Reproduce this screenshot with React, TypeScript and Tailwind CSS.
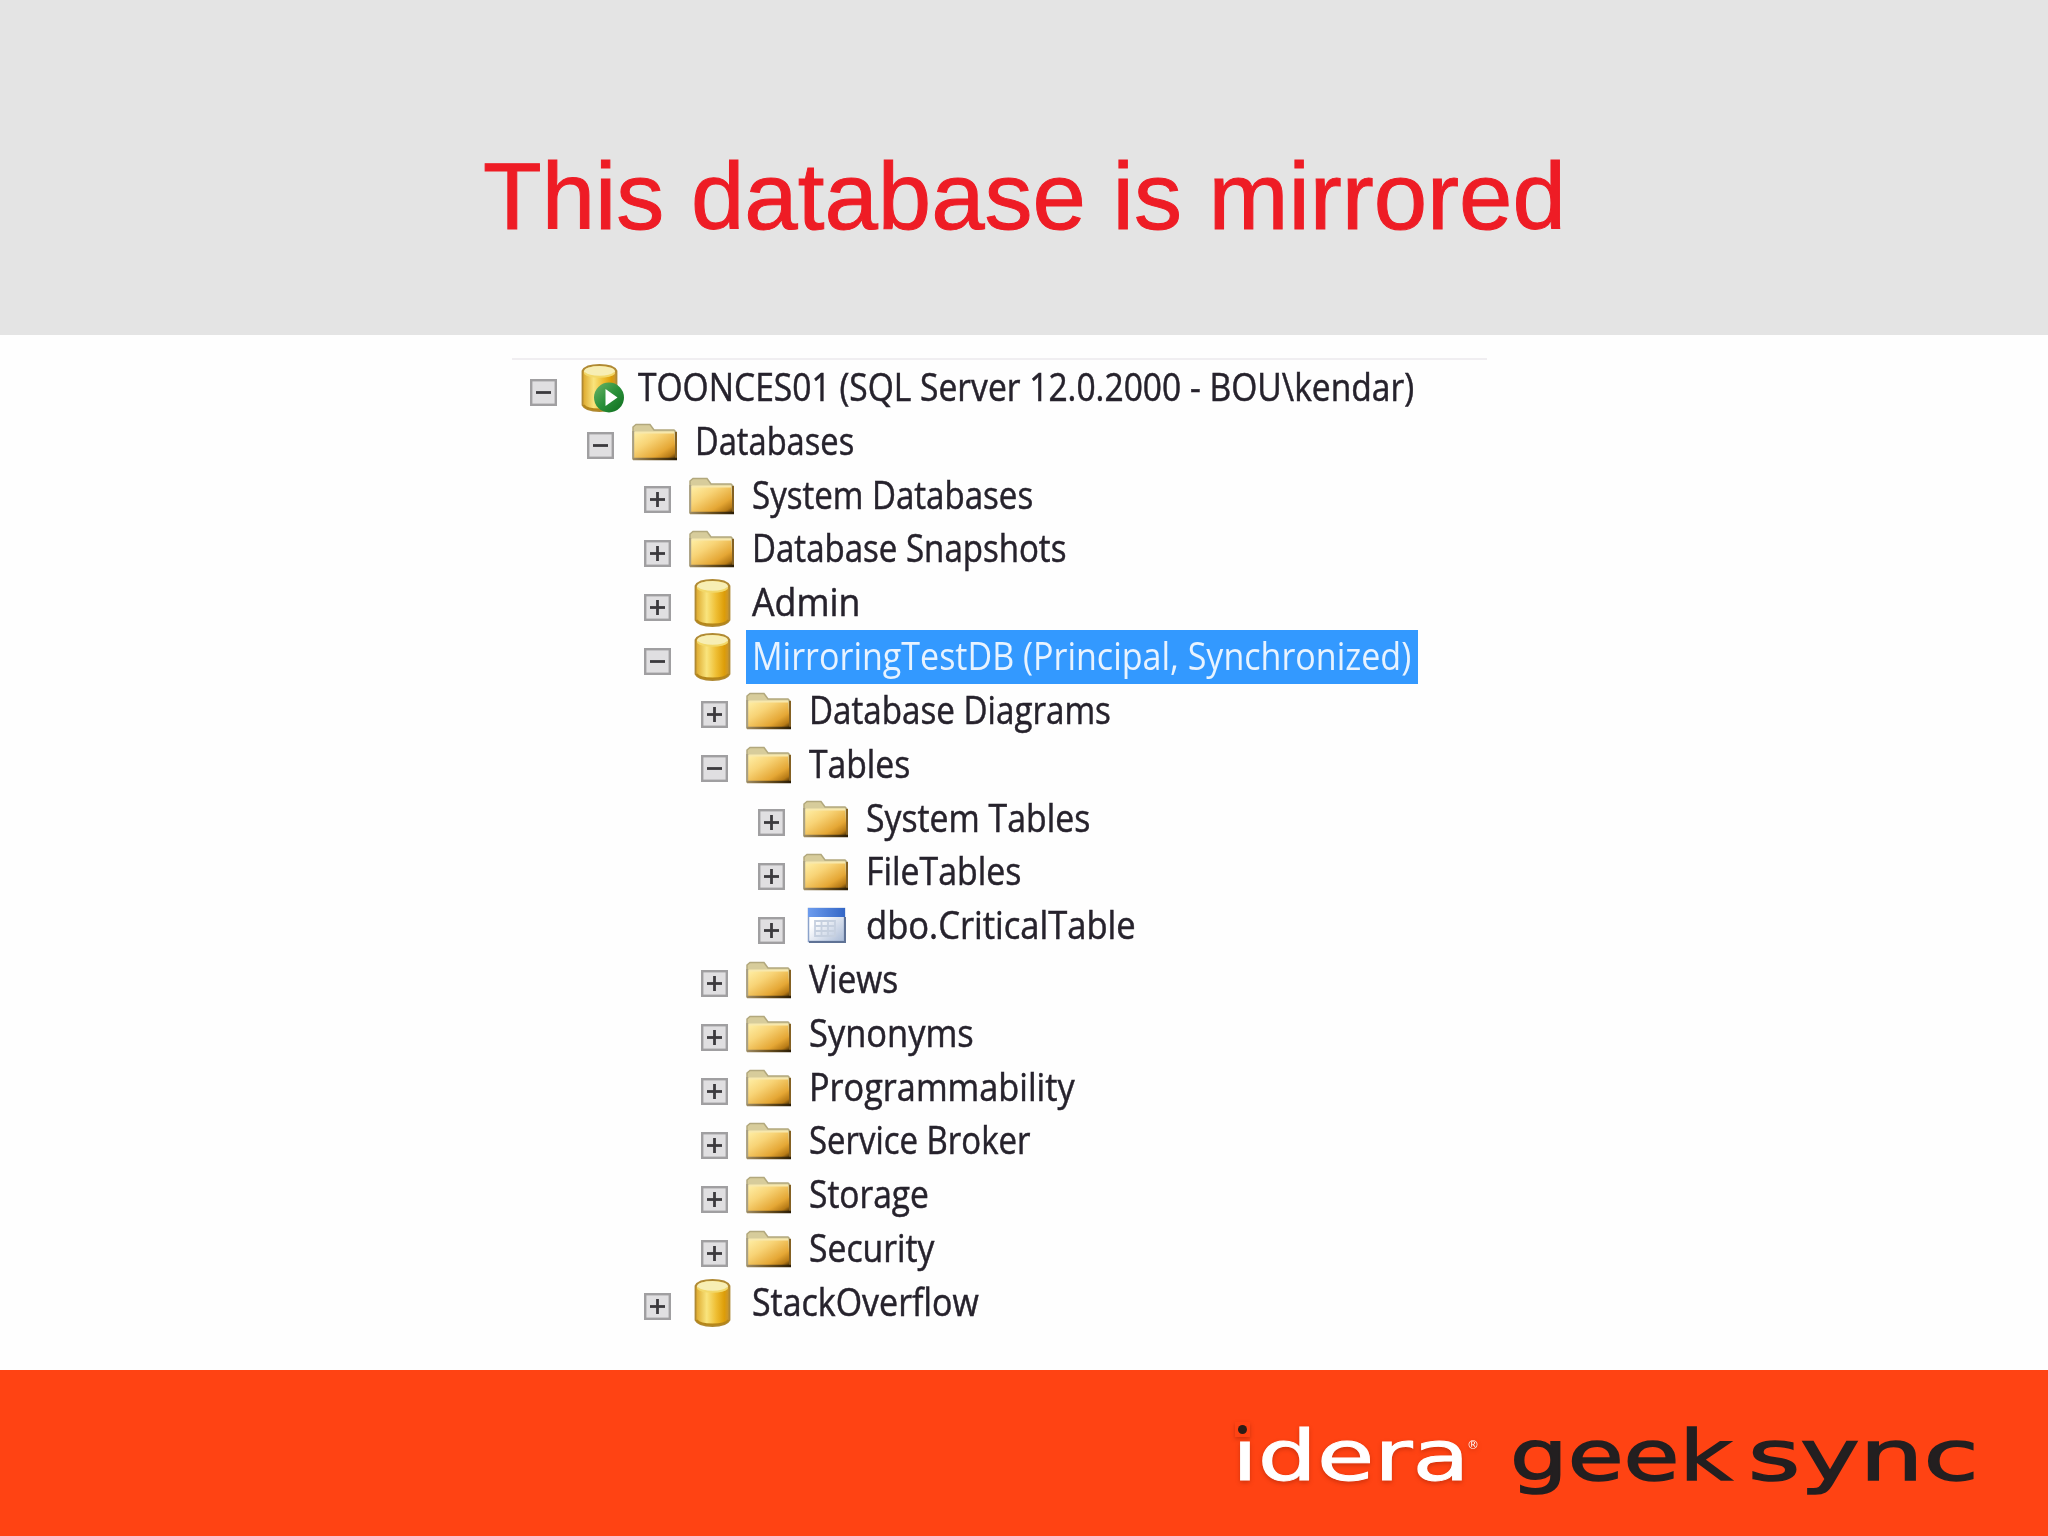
import * as React from 'react'

type IconName = 'server' | 'folder' | 'database' | 'table'

type TreeNode = {
  label: string
  level: number
  icon: IconName
  width: number
  open?: boolean
  selected?: boolean
}

const nodes: Array<TreeNode> = [
  {label: 'TOONCES01 (SQL Server 12.0.2000 - BOU\\kendar)', level: 0, icon: 'server', width: 776, open: true},
  {label: 'Databases', level: 1, icon: 'folder', width: 159, open: true},
  {label: 'System Databases', level: 2, icon: 'folder', width: 281},
  {label: 'Database Snapshots', level: 2, icon: 'folder', width: 314},
  {label: 'Admin', level: 2, icon: 'database', width: 108},
  {label: 'MirroringTestDB (Principal, Synchronized)', level: 2, icon: 'database', width: 659, open: true, selected: true},
  {label: 'Database Diagrams', level: 3, icon: 'folder', width: 302},
  {label: 'Tables', level: 3, icon: 'folder', width: 101, open: true},
  {label: 'System Tables', level: 4, icon: 'folder', width: 224},
  {label: 'FileTables', level: 4, icon: 'folder', width: 155},
  {label: 'dbo.CriticalTable', level: 4, icon: 'table', width: 270},
  {label: 'Views', level: 3, icon: 'folder', width: 89},
  {label: 'Synonyms', level: 3, icon: 'folder', width: 165},
  {label: 'Programmability', level: 3, icon: 'folder', width: 266},
  {label: 'Service Broker', level: 3, icon: 'folder', width: 221},
  {label: 'Storage', level: 3, icon: 'folder', width: 120},
  {label: 'Security', level: 3, icon: 'folder', width: 125},
  {label: 'StackOverflow', level: 2, icon: 'database', width: 227},
]

// Stretches or condenses a line of text to the given width
function FitText({width, children}: {width: number; children: string}) {
  const ref = React.useRef<HTMLSpanElement>(null)
  const [scale, setScale] = React.useState(1)

  React.useLayoutEffect(() => {
    if (!ref.current) return
    setScale(width / ref.current.offsetWidth)
  }, [width])

  return (
    <span className="block" style={{width}}>
      <span
        ref={ref}
        className="inline-block origin-left whitespace-pre"
        style={{transform: `scaleX(${scale})`}}
      >
        {children}
      </span>
    </span>
  )
}

function Expander({open}: {open?: boolean}) {
  return (
    <svg className="mt-[17.5px] h-[27px] w-[27px] shrink-0" viewBox="0 0 27 27">
      <rect x="1.2" y="1.2" width="24.6" height="24.6" fill="#e0dfe1" stroke="#a09fa1" strokeWidth="2.4" />
      <path d="M6 13.5h15" stroke="#3c3a3e" strokeWidth="2.8" />
      {!open && <path d="M13.5 6v15" stroke="#3c3a3e" strokeWidth="2.8" />}
    </svg>
  )
}

function Cylinder({x, y}: {x: number; y: number}) {
  return (
    <g transform={`translate(${x} ${y})`}>
      <path
        d="M1 7C3 3 10 1 18 1s15 2 17 6v34c-2 4-9 6-17 6S3 45 1 41z"
        fill="url(#gold)"
        stroke="#b08a35"
        strokeWidth="1.8"
      />
      <ellipse cx="18" cy="7.5" rx="15.5" ry="5.5" fill="#f7eeb4" />
      <path d="M3 9c5 5 25 5 30 0" fill="none" stroke="#f2d869" strokeWidth="2" />
      <path d="M2 41c4 6 28 6 32 0" fill="none" stroke="#b58619" strokeWidth="2" />
    </g>
  )
}

function NodeIcon({name}: {name: IconName}) {
  return (
    <svg className="h-[54px] w-[57px] shrink-0" viewBox="0 0 57 54">
      {name === 'folder' && (
        <>
          <path d="M1 44V12l3-2.5h14L22 15h20l2 2v27z" fill="#d7cc9b" stroke="#b2a87d" strokeWidth="1.5" />
          <path d="M2 17h40l2 27H2z" fill="url(#folder)" />
          <path d="M2.5 17.5H42" stroke="#f7e8ad" strokeWidth="1.8" />
          <path d="M1.2 16v28" stroke="#a89f84" strokeWidth="2" />
          <path d="M44 17v27" stroke="#846123" strokeWidth="2" />
          <path d="M1 44h44" stroke="url(#edge)" strokeWidth="2.6" />
        </>
      )}
      {name === 'database' && <Cylinder x={5.5} y={3} />}
      {name === 'server' && (
        <>
          <Cylinder x={6.5} y={3} />
          <circle cx="34" cy="36.5" r="15" fill="url(#green)" />
          <path d="M30.5 28v17l12-8.5z" fill="#fff" />
        </>
      )}
      {name === 'table' && (
        <>
          <rect x="5.5" y="9.5" width="36" height="33" fill="url(#sheet)" stroke="#8ba2cb" strokeWidth="1.5" />
          <rect x="5" y="9" width="37" height="9" fill="url(#blue)" />
          <path d="M42 18v25H6" fill="none" stroke="#5f7295" strokeWidth="2" />
          <path d="M12 22h20v15H12zM12 27h20M12 32h20M18.5 22v15M25 22v15" fill="none" stroke="#c6d0df" strokeWidth="1.8" />
        </>
      )}
    </svg>
  )
}

function Gradients() {
  return (
    <svg className="absolute h-0 w-0">
      <defs>
        <linearGradient id="gold">
          <stop offset="0" stopColor="#dca629" />
          <stop offset="0.33" stopColor="#f9e47d" />
          <stop offset="0.6" stopColor="#efbf35" />
          <stop offset="0.85" stopColor="#dd9d08" />
          <stop offset="1" stopColor="#c59436" />
        </linearGradient>
        <linearGradient id="folder" x1="0" y1="0" x2="1" y2="1">
          <stop offset="0" stopColor="#fff0a8" />
          <stop offset="0.35" stopColor="#f8d477" />
          <stop offset="0.7" stopColor="#e5a735" />
          <stop offset="0.87" stopColor="#b87b16" />
          <stop offset="1" stopColor="#3c2704" />
        </linearGradient>
        <linearGradient id="edge" gradientUnits="userSpaceOnUse" x1="0" y1="0" x2="45" y2="0">
          <stop offset="0" stopColor="#a08e68" />
          <stop offset="0.5" stopColor="#6b5120" />
          <stop offset="1" stopColor="#2a1c05" />
        </linearGradient>
        <linearGradient id="green" x1="0" y1="0" x2="1" y2="1">
          <stop offset="0" stopColor="#6db46a" />
          <stop offset="0.5" stopColor="#2b913a" />
          <stop offset="1" stopColor="#0d6c1d" />
        </linearGradient>
        <linearGradient id="blue">
          <stop offset="0" stopColor="#6d9cee" />
          <stop offset="1" stopColor="#3467c6" />
        </linearGradient>
        <linearGradient id="sheet" x1="0" y1="0" x2="1" y2="1">
          <stop offset="0.3" stopColor="#ffffff" />
          <stop offset="1" stopColor="#a9bad6" />
        </linearGradient>
      </defs>
    </svg>
  )
}

export default function App() {
  return (
    <div className="flex h-[1536px] w-[2048px] flex-col overflow-hidden bg-[#fefefe]">
      <Gradients />
      <header className="flex h-[335px] shrink-0 justify-center bg-[#e4e4e4] pt-[141px]">
        <h1 className="font-['Liberation_Sans',sans-serif] text-[95px] leading-[110px] text-[#ee1c25] [-webkit-text-stroke:1px_#ee1c25]">
          <FitText width={1083}>This database is mirrored</FitText>
        </h1>
      </header>

      <main className="h-[1035px] shrink-0 pt-[23px] pl-[512px]">
        <ul className="w-[975px] border-t-2 border-[#f0eef1] pt-px pl-[18px]">
          {nodes.map(node => (
            <li
              key={node.label}
              className="flex h-[53.82px] items-start"
              style={{paddingLeft: node.level * 57}}
            >
              <Expander open={node.open} />
              <div className="ml-[18px] flex">
                <NodeIcon name={node.icon} />
                <div
                  className={
                    node.selected
                      ? 'h-[53.82px] w-[672px] shrink-0 bg-[#3399ff] pl-[5.5px] text-[#e8f3ff]'
                      : 'h-[53.82px] shrink-0 pl-[5.5px] text-[#26222c] [-webkit-text-stroke:0.5px_#26222c]'
                  }
                >
                  <div className="font-['Open_Sans','Noto_Sans',sans-serif] text-[38px] leading-[51px]">
                    <FitText width={node.width}>{node.label}</FitText>
                  </div>
                </div>
              </div>
            </li>
          ))}
        </ul>
      </main>

      <footer className="flex h-[166px] shrink-0 bg-[#ff4313] pt-[51px] pl-[1232px] font-['DejaVu_Sans',sans-serif] text-[70px] leading-none">
        <div className="relative flex text-white drop-shadow-[0_2px_2px_rgba(120,20,0,0.35)] [-webkit-text-stroke:1px_white]">
          <FitText width={238}>idera</FitText>
          <span className="absolute top-px left-[3px] flex h-[15px] w-[15px] items-center justify-center bg-[#ff4313]">
            <span className="h-[9px] w-[9px] rounded-full bg-[#2b1d17]" />
          </span>
          <span className="absolute top-[18px] left-[235px] text-[12px] leading-none [-webkit-text-stroke:0]">
            ®
          </span>
        </div>
        <div className="ml-[40px] flex gap-[16px] text-[#231f20] [-webkit-text-stroke:1.5px_#231f20]">
          <FitText width={222}>geek</FitText>
          <FitText width={231}>sync</FitText>
        </div>
      </footer>
    </div>
  )
}
